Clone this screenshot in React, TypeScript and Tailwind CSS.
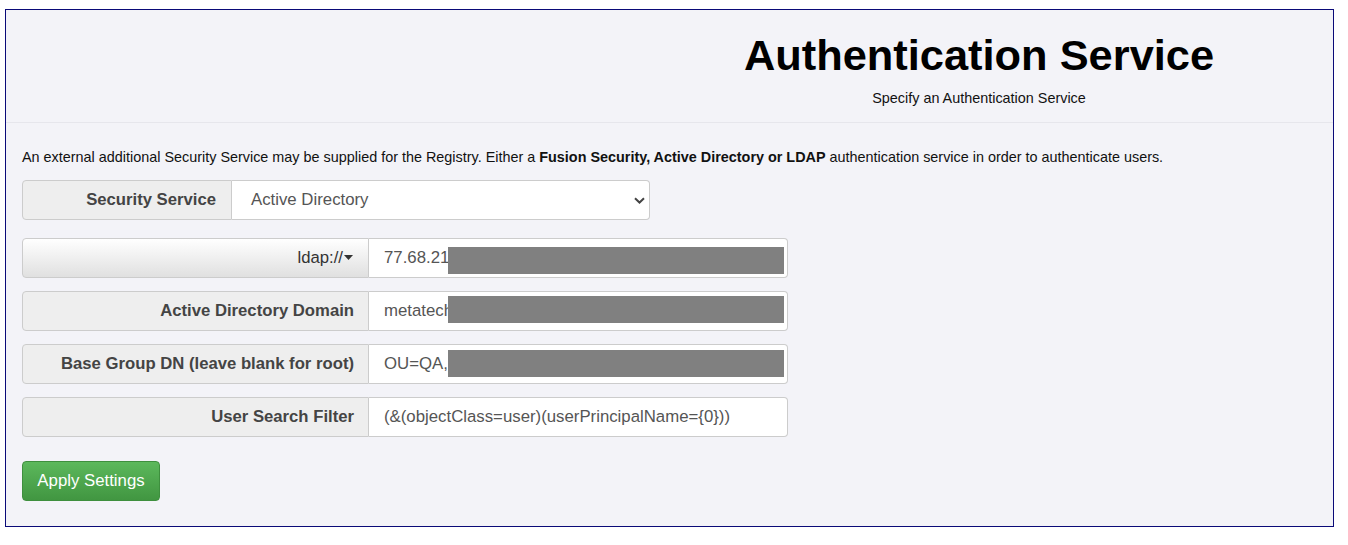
import React from "react";

const font = { fontFamily: '"Liberation Sans", Arial, sans-serif' };

function Chevron() {
  return (
    <svg width="11" height="7" viewBox="0 0 11 7" className="block">
      <path d="M1 1.2 L5.5 5.5 L10 1.2" fill="none" stroke="#444" strokeWidth="2" />
    </svg>
  );
}

function Caret() {
  return (
    <svg width="9" height="5" viewBox="0 0 9 5" className="inline-block ml-[1px]">
      <path d="M0 0 H9 L4.5 5 Z" fill="#333" />
    </svg>
  );
}

type RowProps = {
  label: React.ReactNode;
  value: string;
  redactTop?: number;
  button?: boolean;
};

function Row({ label, value, redactTop, button }: RowProps) {
  return (
    <div className="flex h-[40px] w-[766px]">
      <div
        className={
          button
            ? "flex w-[347px] shrink-0 items-center justify-end rounded-l-[4px] border border-[#cccccc] bg-gradient-to-b from-[#ffffff] to-[#e0e0e0] pr-[15px] text-[16.7px] text-[#333333]"
            : "flex w-[347px] shrink-0 items-center justify-end rounded-l-[4px] border border-[#cccccc] bg-[#eeeeee] pr-[14px] text-[16.7px] font-bold text-[#444444]"
        }
      >
        {label}
      </div>
      <div className="relative flex flex-1 items-center rounded-r-[4px] border border-l-0 border-[#cccccc] bg-white pl-[15px] text-[16.8px] text-[#555555]">
        {value}
        {redactTop !== undefined && (
          <div
            className="absolute left-[79px] right-[3px] h-[27px] bg-[#808080]"
            style={{ top: redactTop }}
          />
        )}
      </div>
    </div>
  );
}

export default function App() {
  return (
    <div className="h-[545px] w-[1348px] bg-white pl-[5px] pt-[9px]" style={font}>
      <div className="h-[518px] w-[1329px] border border-[#0a0a78] bg-[#f3f3f8]">
        <div className="h-[113px] border-b border-[#e6e6ec]">
          <div className="ml-[620px] w-[706px] pt-[24px] text-center">
            <h1 className="text-[43.4px] font-bold leading-[43px] text-black">
              Authentication Service
            </h1>
            <p className="mt-[13px] text-[14.4px] leading-[16px] text-[#111111]">
              Specify an Authentication Service
            </p>
          </div>
        </div>
        <div className="pl-[16px] pt-[24px]">
          <p className="text-[14.4px] leading-[20px] text-[#111111]">
            An external additional Security Service may be supplied for the Registry. Either a{" "}
            <b>Fusion Security, Active Directory or LDAP</b> authentication service in order to
            authenticate users.
          </p>
          <div className="mt-[13px] flex h-[40px] w-[628px]">
            <div className="flex w-[210px] shrink-0 items-center justify-end rounded-l-[4px] border border-[#cccccc] bg-[#eeeeee] pr-[15px] text-[16.7px] font-bold text-[#444444]">
              Security Service
            </div>
            <div className="flex flex-1 items-center justify-between rounded-r-[4px] border border-l-0 border-[#cccccc] bg-white pl-[19px] pr-[4px] text-[16.8px] text-[#555555]">
              <span>Active Directory</span>
              <Chevron />
            </div>
          </div>
          <div className="mt-[18px] flex flex-col gap-[13px]">
            <Row
              button
              label={
                <span className="flex items-center">
                  ldap://
                  <Caret />
                </span>
              }
              value="77.68.21"
              redactTop={8}
            />
            <Row label="Active Directory Domain" value="metatech" redactTop={4} />
            <Row label="Base Group DN (leave blank for root)" value="OU=QA," redactTop={5} />
            <Row label="User Search Filter" value="(&(objectClass=user)(userPrincipalName={0}))" />
          </div>
          <button className="mt-[24px] h-[40px] w-[138px] rounded-[4px] border border-[#3e8f3e] bg-gradient-to-b from-[#5cb85c] to-[#419641] text-[16.8px] text-white">
            Apply Settings
          </button>
        </div>
      </div>
    </div>
  );
}
